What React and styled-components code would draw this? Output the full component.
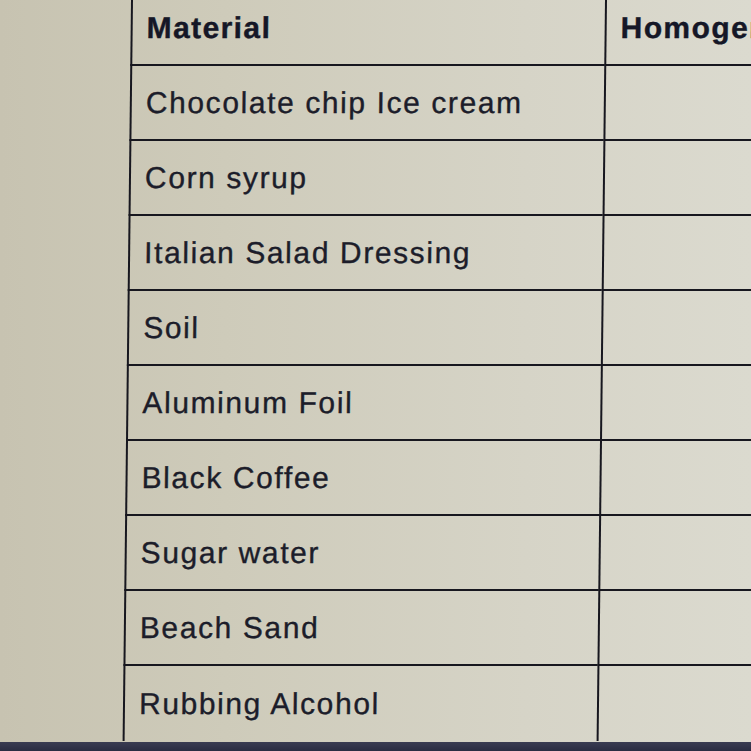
import React from "react";
import styled, { createGlobalStyle } from "styled-components";

const materials = [
  "Chocolate chip Ice cream",
  "Corn syrup",
  "Italian Salad Dressing",
  "Soil",
  "Aluminum Foil",
  "Black Coffee",
  "Sugar water",
  "Beach Sand",
  "Rubbing Alcohol",
];

const GlobalStyle = createGlobalStyle`
  html, body {
    margin: 0;
    padding: 0;
    width: 751px;
    height: 751px;
    overflow: hidden;
    background: #2c2e44;
  }
`;

const Page = styled.div`
  width: 751px;
  height: 751px;
  display: flex;
  flex-direction: column;
  overflow: hidden;
`;

const Screen = styled.div`
  flex: 1;
  display: flex;
  padding-left: 131px;
  overflow: hidden;
  background: linear-gradient(90deg, #c7c3b1 0%, #cecbba 30%, #d6d4c7 70%, #dbdacf 100%);
`;

const Table = styled.div`
  display: grid;
  grid-template-columns: 474px 300px;
  grid-template-rows: 66px repeat(9, 75px);
  flex-shrink: 0;
  transform: skewX(-0.65deg);
  transform-origin: top left;
  font-family: "Liberation Sans", Arial, sans-serif;
`;

const Cell = styled.div`
  display: flex;
  align-items: center;
  padding: ${(p) => (p.$head ? "0 0 8px 14px" : "0 0 0 14px")};
  border-bottom: 2px solid #17171f;
  border-left: 2px solid #17171f;
  font-size: 30px;
  font-weight: ${(p) => (p.$head ? 700 : 400)};
  letter-spacing: ${(p) => (p.$head ? "1.4px" : "1.6px")};
  color: ${(p) => (p.$head ? "#151727" : "#1c1d2a")};
  -webkit-text-stroke: ${(p) => (p.$head ? "0.4px" : "0.35px")} currentColor;
  white-space: nowrap;
  &:nth-last-child(-n + 2) {
    border-bottom: none;
  }
`;

const Bezel = styled.div`
  height: 9px;
  background: linear-gradient(180deg, #3a3c52 0%, #2a2c42 100%);
`;

export default function App() {
  return (
    <Page>
      <GlobalStyle />
      <Screen>
        <Table>
          <Cell $head>Material</Cell>
          <Cell $head>Homogeneous</Cell>
          {materials.map((m) => (
            <React.Fragment key={m}>
              <Cell>{m}</Cell>
              <Cell />
            </React.Fragment>
          ))}
        </Table>
      </Screen>
      <Bezel />
    </Page>
  );
}
